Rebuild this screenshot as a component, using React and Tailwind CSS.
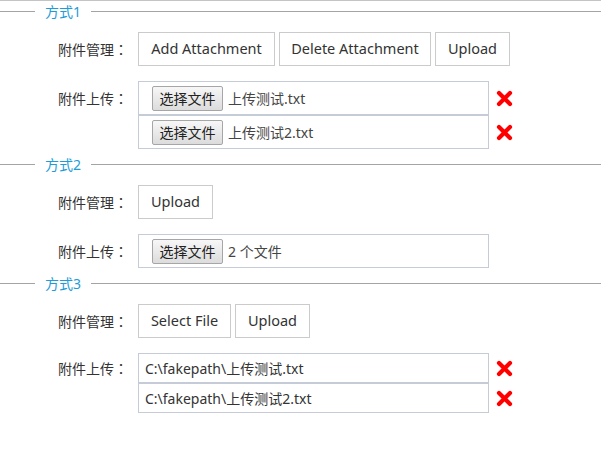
import React from "react";

const font = { fontFamily: '"Noto Sans", "Noto Sans CJK SC", sans-serif' };

function Legend({ title, className }) {
  return (
    <div className={`flex h-[21px] items-center ${className}`}>
      <div className="h-px w-[35px] bg-[#a3a3a3]"></div>
      <span className="px-[10px] text-[14px] leading-[21px] text-[#1e9cd8]">{title}</span>
      <div className="h-px flex-1 bg-[#a3a3a3]"></div>
    </div>
  );
}

function RedX() {
  return (
    <svg className="ml-[7px] h-[17px] w-[17px]" viewBox="0 0 17 17">
      <path d="M3 3 L14 14 M14 3 L3 14" stroke="#ff0000" strokeWidth="4.2" strokeLinecap="round" fill="none" />
    </svg>
  );
}

function Btn({ children, w }) {
  return (
    <button className={`h-[34px] ${w} border border-[#cbcbcb] bg-white text-[14.5px] text-[#333]`}>
      {children}
    </button>
  );
}

function FileRow({ text, remove }) {
  return (
    <div className="flex items-center">
      <div className="flex h-[34px] w-[351px] items-center border border-[#c6ccd7] pl-[13px]">
        <span className="h-[25px] w-[71px] rounded-[2px] border border-[#a6a6a6] bg-gradient-to-b from-[#f7f7f7] to-[#dcdcdc] text-center text-[14px] leading-[23px] text-[#222]">
          选择文件
        </span>
        <span className="ml-[5px] text-[14px] text-[#444]">{text}</span>
      </div>
      {remove && <RedX />}
    </div>
  );
}

function PathRow({ text }) {
  return (
    <div className="flex items-center">
      <div className="flex h-[30px] w-[351px] items-center border border-[#c6ccd7] pl-[6px] text-[14px] text-[#333]">
        {text}
      </div>
      <RedX />
    </div>
  );
}

function Label({ children, h }) {
  return (
    <div className={`flex ${h} w-[128px] shrink-0 items-center justify-end text-[14px] text-[#333]`}>
      {children}
      <span className="font-['Noto_Sans_CJK_TC']">：</span>
    </div>
  );
}

export default function App() {
  return (
    <div className="h-[462px] w-[601px] bg-white" style={font}>
      <div className="h-px w-full bg-[#c4c4c4]"></div>

      <Legend title="方式1" className="" />
      <div className="mt-[10px] flex">
        <Label h="h-[34px]">附件管理</Label>
        <div className="ml-[10px] flex gap-[4px]">
          <Btn w="w-[137px]">Add Attachment</Btn>
          <Btn w="w-[152px]">Delete Attachment</Btn>
          <Btn w="w-[75px]">Upload</Btn>
        </div>
      </div>
      <div className="mt-[15px] flex items-start">
        <Label h="h-[34px]">附件上传</Label>
        <div className="ml-[10px] flex flex-col">
          <FileRow text="上传测试.txt" remove />
          <FileRow text="上传测试2.txt" remove />
        </div>
      </div>

      <Legend title="方式2" className="mt-[5px]" />
      <div className="mt-[10px] flex">
        <Label h="h-[34px]">附件管理</Label>
        <div className="ml-[10px] flex">
          <Btn w="w-[75px]">Upload</Btn>
        </div>
      </div>
      <div className="mt-[15px] flex items-start">
        <Label h="h-[34px]">附件上传</Label>
        <div className="ml-[10px] flex flex-col">
          <FileRow text="2 个文件" />
        </div>
      </div>

      <Legend title="方式3" className="mt-[5px]" />
      <div className="mt-[10px] flex">
        <Label h="h-[34px]">附件管理</Label>
        <div className="ml-[10px] flex gap-[4px]">
          <Btn w="w-[93px]">Select File</Btn>
          <Btn w="w-[75px]">Upload</Btn>
        </div>
      </div>
      <div className="mt-[15px] flex items-start">
        <Label h="h-[30px]">附件上传</Label>
        <div className="ml-[10px] flex flex-col">
          <PathRow text="C:\fakepath\上传测试.txt" />
          <PathRow text="C:\fakepath\上传测试2.txt" />
        </div>
      </div>
    </div>
  );
}
